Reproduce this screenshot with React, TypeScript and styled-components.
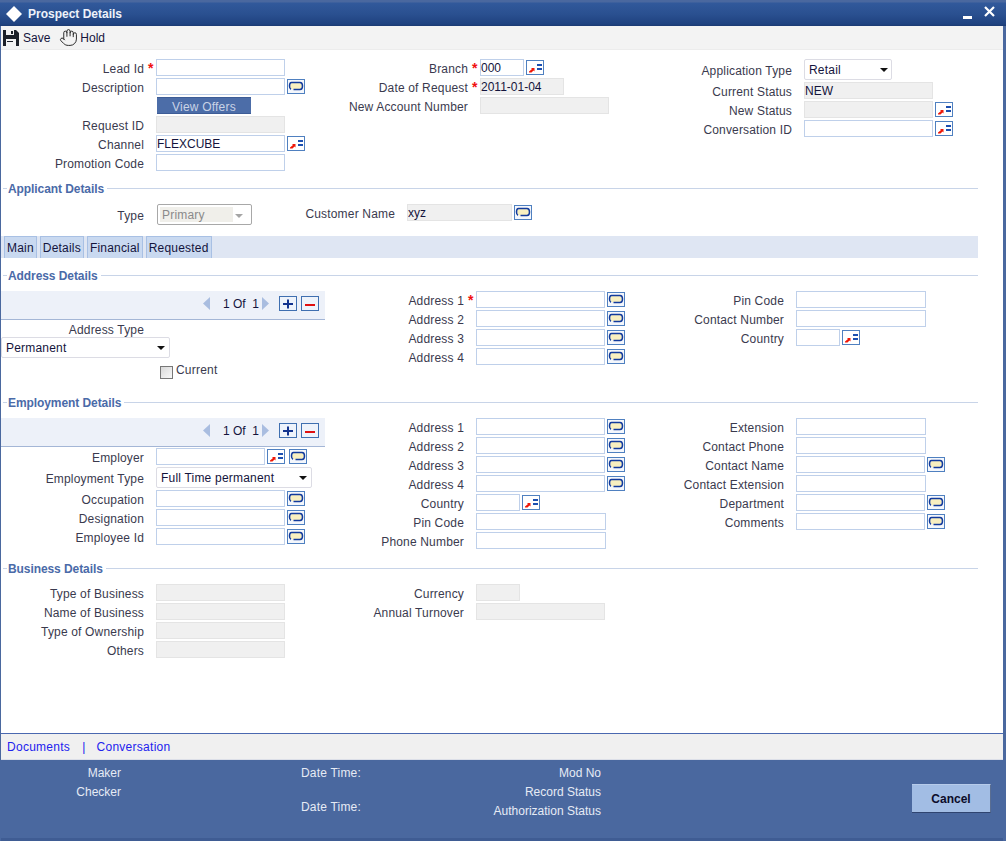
import React from "react";
import styled, { createGlobalStyle } from "styled-components";
import { Hand } from "lucide-react";

const Global = createGlobalStyle`
  html, body { margin: 0; padding: 0; background: #fff; }
  * { box-sizing: border-box; }
  body { font-family: "Liberation Sans", Arial, sans-serif; font-size: 12px; }
`;

const Win = styled.div`
  width: 1006px; height: 841px; display: flex; flex-direction: column;
  background: #4a689f; padding: 0 3px 0 1px; overflow: hidden;
`;
const TitleBar = styled.div`
  height: 26px; flex: none; margin: 0 -3px 0 -1px; padding: 2px 11px 0 6px; display: flex; align-items: center;
  background: linear-gradient(#4a689f 0 2px, #31599b 3px, #2a5090 14px, #1f4280 24px, #1b3a72 26px);
  color: #fff; font-weight: bold;
`;
const TitleText = styled.span` margin-left: 6px; color: #eef2fa; `;
const WinButtons = styled.div` margin-left: auto; display: flex; align-items: center; gap: 12px; `;
const MinIcon = styled.svg` display: block; margin-top: 6px; `;
const CloseIcon = styled.svg` display: block; margin-top: -5px; `;
const Toolbar = styled.div`
  height: 24px; flex: none; background: #f3f3f3; display: flex; align-items: center; padding-left: 2px;
  border-bottom: 1px solid #ececec;
`;
const ToolItem = styled.div<{ $gap: number; $left?: number }>`
  display: flex; align-items: center; gap: ${p => p.$gap}px; margin-left: ${p => p.$left ?? 0}px; color: #14143c;
`;
const Body = styled.div`
  flex: 1; min-height: 0; background: #fff; padding-top: 9px; display: flex; flex-direction: column;
`;
const Columns = styled.div<{ $cols: string }>`
  display: grid; grid-template-columns: ${p => p.$cols}; align-items: start;
`;
const Stack = styled.div<{ $top?: number }>`
  display: flex; flex-direction: column; gap: 2px; padding-top: ${p => p.$top ?? 0}px;
`;
const Row = styled.div<{ $lw: number }>`
  display: grid; grid-template-columns: ${p => p.$lw}px 12px auto; align-items: center; min-height: 17px;
`;
const Label = styled.label`
  text-align: right; color: #3a3a4e; white-space: nowrap; line-height: 21px; height: 17px; letter-spacing: .17px;
`;
const Star = styled.span`
  color: #f01010; font-weight: bold; font-size: 14px; line-height: 14px; padding-left: 4px;
`;
const Control = styled.div` display: flex; align-items: center; `;
const Input = styled.input<{ $w: number; $off?: boolean }>`
  width: ${p => p.$w}px; height: 17px; padding: 0; margin: 0; outline: none;
  font: 12px "Liberation Sans", Arial, sans-serif; color: #14143c;
  background: ${p => (p.$off ? "#f0f0f0" : "#fff")};
  border: 1px solid ${p => (p.$off ? "#e4e4e4" : "#bfd0ea")};
`;
const IconBtn = styled.svg<{ $left?: number }>`
  flex: none; display: block; margin-left: ${p => p.$left ?? 2}px;
`;
const OffersBtn = styled.div`
  width: 94px; height: 17px; margin-left: 156px; background: #4c6da8; color: #c9d3e6;
  border-top: 1px solid #3d5c96; border-bottom: 1px solid #3d5c96;
  text-align: center; line-height: 19px; overflow: hidden; letter-spacing: .2px;
`;
const Select = styled.div<{ $w: number; $tri: number }>`
  position: relative; width: ${p => p.$w}px; height: 21px; background: #fff; color: #14143c;
  border: 1px solid #dcdce4; border-radius: 2px; padding-left: 4px; line-height: 20px; letter-spacing: .2px;
  &::after {
    content: ""; position: absolute; right: ${p => p.$tri}px; top: 8px;
    border-left: 4px solid transparent; border-right: 4px solid transparent; border-top: 4px solid #111;
  }
`;
const OffSelect = styled.div`
  position: relative; width: 95px; height: 21px; margin-left: 1px; border: 1px solid #a8a8a8; border-radius: 2px;
  padding: 2px; color: #8a8a8a; letter-spacing: .2px;
  &::after {
    content: ""; position: absolute; right: 8px; top: 9px;
    border-left: 4px solid transparent; border-right: 4px solid transparent; border-top: 4px solid #a5a5a5;
  }
`;
const OffSelectText = styled.div`
  width: 73px; height: 15px; background: #f0efea; line-height: 16px; padding-left: 2px;
`;
const Legend = styled.div<{ $top: number }>`
  height: 13px; margin: ${p => p.$top}px 25px 9px 2px; display: flex; align-items: center; gap: 1px;
  color: #4a6aa8; font-weight: bold; letter-spacing: -.08px;
  &::before { content: ""; width: 4px; height: 1px; background: #c8d4e8; }
  &::after { content: ""; flex: 1; height: 1px; background: #c8d4e8; margin-left: 2px; }
`;
const LegendText = styled.span` line-height: 15px; height: 13px; `;
const TabBar = styled.div`
  height: 22px; width: 977px; margin-top: 11px; background: #dfe6f3; display: flex; padding-left: 3px; gap: 3px;
`;
const Tab = styled.div`
  height: 22px; padding: 0 2px 0 2px; background: #c9d9f0; border: 1px solid #a8c0e4; border-bottom: 0;
  color: #14143c; line-height: 22px; letter-spacing: .2px;
`;
const Pager = styled.div`
  height: 29px; width: 324px; background: #edf1f9; border-bottom: 1px solid #a4b6d6;
  display: flex; align-items: center; justify-content: flex-end; padding: 0 6px 3px 0; color: #14143c;
`;
const PagerText = styled.span` margin: 0 5px 0 13px; width: 34px; white-space: pre; `;
const PagerArrow = styled.svg<{ $right?: number }>` display: block; margin-right: ${p => p.$right ?? 0}px; `;
const AddressTypeLabel = styled.div`
  width: 143px; margin-top: 2px; height: 15px; text-align: right; color: #3a3a4e; line-height: 17px; letter-spacing: .17px;
`;
const CheckRow = styled.div`
  display: flex; align-items: flex-start; gap: 3px; margin: 5px 0 0 159px; height: 16px; color: #3a3a4e; line-height: 15px; letter-spacing: .2px;
`;
const Check = styled.span`
  width: 13px; height: 13px; margin-top: 3px; border: 1px solid #777;
  background: linear-gradient(135deg, #d8d8d8, #f8f8f8); display: block;
`;
const Spacer = styled.div` flex: 1; `;
const LinkBar = styled.div`
  height: 27px; flex: none; background: #f0f0f0; border-top: 1px solid #4a68b0; border-bottom: 1px solid #dcdfe8;
  padding: 0 0 0 6px; display: flex; align-items: center; color: #2222ee; letter-spacing: .27px;
`;
const LinkSep = styled.span` margin: 0 11px 0 12px; `;
const Status = styled.div`
  height: 81px; flex: none; display: flex; align-items: flex-start; padding-top: 4px; color: #e6ebf5;
  border-bottom: 3px solid #3f5c93;
`;
const StatusCol = styled.div<{ $w: number; $right?: boolean; $left?: number }>`
  width: ${p => p.$w}px; margin-left: ${p => p.$left ?? 0}px; text-align: ${p => (p.$right ? "right" : "left")};
  line-height: 19px; white-space: nowrap;
`;
const DateLine = styled.div<{ $top?: number }>` margin-top: ${p => p.$top ?? 0}px; letter-spacing: .2px; `;
const Cancel = styled.div`
  width: 79px; height: 29px; margin: 20px 0 0 311px; background: #a2bde4; color: #0c0c2a; font-weight: bold;
  text-align: center; line-height: 28px; border-right: 1px solid #5a6e92; border-bottom: 1px solid #2f4470; border-top: 1px solid #b6cbea;
`;

const Note = ({ left }: { left?: number }) => (
  <IconBtn $left={left} width="18" height="15" viewBox="0 0 18 15">
    <rect x=".5" y=".5" width="17" height="14" fill="#f4f7fc" stroke="#4f80c0" />
    <path d="M5 4h8c1.400 0 2 1 2 3s-.6 3-2 3H6l-1 1v-1C3.800 9.700 3 8.800 3 7s.8-3 2-3z" fill="#f8efc0" />
    <path d="M4.500 3.500h8.500c1.700 0 2.500 1.200 2.500 3.500s-.8 3.500-2.500 3.500H6.500M4 10.300C3 9.800 2.500 8.700 2.500 7c0-2.300 .8-3.500 2-3.500" fill="none" stroke="#123a9c" strokeWidth="1.500" />
  </IconBtn>
);
const Lov = ({ left }: { left?: number }) => (
  <IconBtn $left={left} width="18" height="15" viewBox="0 0 18 15">
    <rect x=".5" y=".5" width="17" height="14" fill="#fff" stroke="#4f80c0" />
    <path d="M3 12.500h2.500l2-2 1 1V8H5l1 1-3 2.500z" fill="#f01808" />
    <rect x="11" y="4" width="5" height="2" fill="#1c4fb0" />
    <rect x="11" y="8" width="5" height="2" fill="#1c4fb0" />
  </IconBtn>
);
const PlusMinus = ({ minus, right }: { minus?: boolean; right?: number }) => (
  <PagerArrow $right={right} width="18" height="15" viewBox="0 0 18 15">
    <rect x=".5" y=".5" width="17" height="14" fill="#eef3fb" stroke="#3f6fb0" />
    {minus ? <rect x="4" y="8" width="10" height="2" fill="#e01010" /> : <path d="M4 7h4V3.500h2V7h4v2h-4v3.500H8V9H4z" fill="#12338f" />}
  </PagerArrow>
);

type FieldProps = {
  label: string; w?: number; lw?: number; req?: boolean; off?: boolean; value?: string;
  icon?: "note" | "lov"; children?: React.ReactNode;
};
const Field = ({ label, w = 129, lw = 143, req, off, value, icon, children }: FieldProps) => (
  <Row $lw={lw}>
    <Label>{label}</Label>
    {req ? <Star>*</Star> : <span />}
    <Control>
      {children ?? <Input $w={w} $off={off} readOnly value={value ?? ""} />}
      {icon === "note" && <Note />}
      {icon === "lov" && <Lov />}
    </Control>
  </Row>
);

const PagerBar = () => (
  <Pager>
    <PagerArrow width="7" height="13" viewBox="0 0 7 13"><path d="M7 0v13L0 6.500z" fill="#a9bde0" /></PagerArrow>
    <PagerText>1 Of  1</PagerText>
    <PagerArrow $right={10} width="7" height="13" viewBox="0 0 7 13"><path d="M0 0v13l7-6.500z" fill="#a9bde0" /></PagerArrow>
    <PlusMinus right={4} />
    <PlusMinus minus />
  </Pager>
);

export default function App() {
  return (
    <Win>
      <Global />
      <TitleBar>
        <svg width="16" height="16" viewBox="0 0 16 16"><path d="M8 0l8 8-8 8-8-8z" fill="#fff" /></svg>
        <TitleText>Prospect Details</TitleText>
        <WinButtons>
          <MinIcon width="9" height="3" viewBox="0 0 9 3"><rect width="9" height="3" fill="#fff" /></MinIcon>
          <CloseIcon width="11" height="11" viewBox="0 0 11 11"><path d="M1 1l9 9M10 1l-9 9" stroke="#fff" strokeWidth="2.200" /></CloseIcon>
        </WinButtons>
      </TitleBar>
      <Toolbar>
        <ToolItem $gap={4}>
          <svg width="16" height="16" viewBox="0 0 16 16">
            <path d="M0 0h13l3 3v13H0z" fill="#1c2028" />
            <rect x="3" y="0" width="8" height="5" fill="#f3f3f3" />
            <rect x="8" y="1" width="2" height="3" fill="#1c2028" />
            <rect x="3" y="9" width="10" height="7" fill="#f3f3f3" />
            <rect x="4" y="11" width="6" height="1" fill="#1c2028" />
          </svg>
          Save
        </ToolItem>
        <ToolItem $gap={2} $left={9}>
          <Hand size={19} strokeWidth={1.2} color="#222" />
          Hold
        </ToolItem>
      </Toolbar>
      <Body>
        <Columns $cols="324px 324px 1fr">
          <Stack>
            <Field label="Lead Id" req />
            <Field label="Description" icon="note" />
            <OffersBtn>View Offers</OffersBtn>
            <Field label="Request ID" off />
            <Field label="Channel" value="FLEXCUBE" icon="lov" />
            <Field label="Promotion Code" />
          </Stack>
          <Stack>
            <Field label="Branch" req w={44} value="000" icon="lov" />
            <Field label="Date of Request" req off w={84} value="2011-01-04" />
            <Field label="New Account Number" off />
          </Stack>
          <Stack>
            <Field label="Application Type"><Select $w={88} $tri={3}>Retail</Select></Field>
            <Field label="Current Status" off value="NEW" />
            <Field label="New Status" off icon="lov" />
            <Field label="Conversation ID" icon="lov" />
          </Stack>
        </Columns>

        <Legend $top={11}><LegendText>Applicant Details</LegendText></Legend>
        <Columns $cols="280px 1fr">
          <Row $lw={143}>
            <Label>Type</Label>
            <span />
            <Control><OffSelect><OffSelectText>Primary</OffSelectText></OffSelect></Control>
          </Row>
          <Field label="Customer Name" lw={114} w={105} off value="xyz" icon="note" />
        </Columns>

        <TabBar>
          <Tab>Main</Tab>
          <Tab>Details</Tab>
          <Tab>Financial</Tab>
          <Tab>Requested</Tab>
        </TabBar>

        <Legend $top={11}><LegendText>Address Details</LegendText></Legend>
        <Columns $cols="324px 320px 1fr">
          <div>
            <PagerBar />
            <AddressTypeLabel>Address Type</AddressTypeLabel>
            <Select $w={169} $tri={4}>Permanent</Select>
            <CheckRow><Check />Current</CheckRow>
          </div>
          <Stack>
            <Field label="Address 1" lw={139} req icon="note" />
            <Field label="Address 2" lw={139} icon="note" />
            <Field label="Address 3" lw={139} icon="note" />
            <Field label="Address 4" lw={139} icon="note" />
          </Stack>
          <Stack>
            <Field label="Pin Code" lw={139} w={130} />
            <Field label="Contact Number" lw={139} w={130} />
            <Field label="Country" lw={139} w={44} icon="lov" />
          </Stack>
        </Columns>

        <Legend $top={17}><LegendText>Employment Details</LegendText></Legend>
        <Columns $cols="324px 320px 1fr">
          <div>
            <PagerBar />
            <Stack $top={1}>
              <Field label="Employer"><Input $w={109} readOnly value="" /><Lov /><Note left={4} /></Field>
              <Field label="Employment Type"><Select $w={156} $tri={4}>Full Time permanent</Select></Field>
              <Field label="Occupation" icon="note" />
              <Field label="Designation" icon="note" />
              <Field label="Employee Id" icon="note" />
            </Stack>
          </div>
          <Stack>
            <Field label="Address 1" lw={139} icon="note" />
            <Field label="Address 2" lw={139} icon="note" />
            <Field label="Address 3" lw={139} icon="note" />
            <Field label="Address 4" lw={139} icon="note" />
            <Field label="Country" lw={139} w={44} icon="lov" />
            <Field label="Pin Code" lw={139} w={130} />
            <Field label="Phone Number" lw={139} w={130} />
          </Stack>
          <Stack>
            <Field label="Extension" lw={139} w={130} />
            <Field label="Contact Phone" lw={139} w={130} />
            <Field label="Contact Name" lw={139} w={129} icon="note" />
            <Field label="Contact Extension" lw={139} w={130} />
            <Field label="Department" lw={139} w={129} icon="note" />
            <Field label="Comments" lw={139} w={129} icon="note" />
          </Stack>
        </Columns>

        <Legend $top={13}><LegendText>Business Details</LegendText></Legend>
        <Columns $cols="324px 320px 1fr">
          <Stack>
            <Field label="Type of Business" off />
            <Field label="Name of Business" off />
            <Field label="Type of Ownership" off />
            <Field label="Others" off />
          </Stack>
          <Stack>
            <Field label="Currency" lw={139} w={44} off />
            <Field label="Annual Turnover" lw={139} off />
          </Stack>
        </Columns>
        <Spacer />
      </Body>
      <LinkBar>
        Documents<LinkSep>|</LinkSep>Conversation
      </LinkBar>
      <Status>
        <StatusCol $w={120} $right>
          <div>Maker</div>
          <div>Checker</div>
        </StatusCol>
        <StatusCol $w={100} $left={180}>
          <DateLine>Date Time:</DateLine>
          <DateLine $top={15}>Date Time:</DateLine>
        </StatusCol>
        <StatusCol $w={200} $right>
          <div>Mod No</div>
          <div>Record Status</div>
          <div>Authorization Status</div>
        </StatusCol>
        <Cancel>Cancel</Cancel>
      </Status>
    </Win>
  );
}
